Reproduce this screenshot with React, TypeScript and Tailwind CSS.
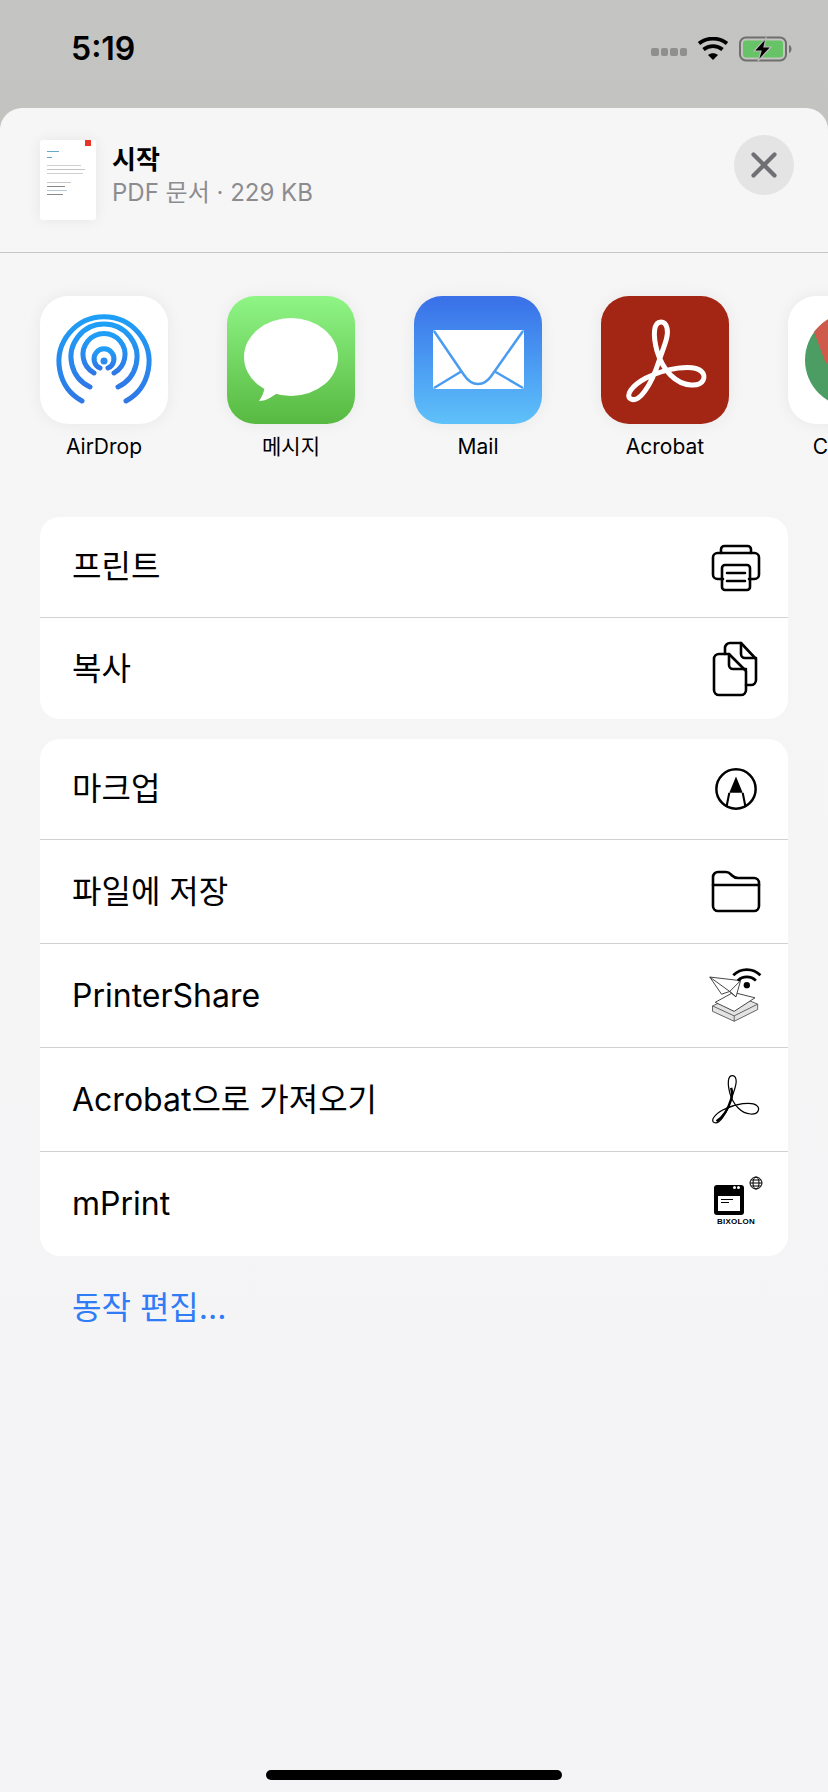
import React from "react";

const ff = { fontFamily: '"Inter","Noto Sans CJK KR",sans-serif' };
const acro = "M60 26C52 26 52 40 56 55C62 75 75 88 90 89C103 90 106 80 100 75C92 68 65 72 45 82C30 90 24 100 30 103C38 107 50 90 58 65C63 50 68 40 66 32C65 28 63 26 60 26Z";

function AirDropIcon() {
  return (
    <svg viewBox="0 0 128 128" className="w-full h-full">
      <defs>
        <linearGradient id="ad" x1="0" y1="0" x2="0" y2="1">
          <stop offset="0" stopColor="#1f9ff6" />
          <stop offset="1" stopColor="#2f78e6" />
        </linearGradient>
      </defs>
      <g fill="none" stroke="url(#ad)" strokeWidth="5" strokeLinecap="round" gradientUnits="userSpaceOnUse">
        <path d="M42 105A45 45 0 1 1 86 105" />
        <path d="M50 91A33 33 0 1 1 78 91" />
        <path d="M54 77A21 21 0 1 1 74 77" />
        <path d="M60 72A10 10 0 1 1 68 72" />
      </g>
      <circle cx="64" cy="65" r="3.5" fill="#2b8cf0" />
    </svg>
  );
}
function MessageIcon() {
  return (
    <svg viewBox="0 0 128 128" className="w-full h-full">
      <ellipse cx="64" cy="61" rx="47" ry="39" fill="#fff" />
      <path d="M38 90C37 96 35 101 32 105C40 105 46 100 52 96Z" fill="#fff" />
    </svg>
  );
}
function MailIcon() {
  return (
    <svg viewBox="0 0 128 128" className="w-full h-full">
      <rect x="19" y="34" width="91" height="59" rx="2" fill="#fff" />
      <path d="M20 35L50 79C58 91 70 91 78 79L109 35M20 92L48 75M109 92L80 75" fill="none" stroke="#4a9cf0" strokeWidth="2.5" />
    </svg>
  );
}
function ChromeIcon() {
  return (
    <svg viewBox="0 0 128 128" className="w-full h-full">
      <circle cx="64" cy="64" r="47" fill="#4b9d64" />
      <path d="M26 36A47 47 0 0 1 102 36L64 40L38 68Z" fill="#cf5b4d" />
      <path d="M111 64A47 47 0 0 1 64 111L84 64Z" fill="#f3c64b" />
      <circle cx="64" cy="64" r="22" fill="#fff" />
      <circle cx="64" cy="64" r="17" fill="#4f8fe0" />
    </svg>
  );
}
function AcroTile() {
  return (
    <svg viewBox="0 0 128 128" className="w-full h-full">
      <path d={acro} fill="none" stroke="#fff" strokeWidth="5" />
    </svg>
  );
}
const black = { fill: "none", stroke: "#000", strokeWidth: 2.6, strokeLinejoin: "round" as const, strokeLinecap: "round" as const };

function PrintIcon() {
  return (
    <svg viewBox="0 0 52 52" className="w-[52px] h-[52px]">
      <g {...black}>
        <path d="M11 12V8.5A3.5 3.5 0 0 1 14.5 5H37.500A3.500 3.500 0 0 1 41 8.500V12" />
        <path d="M13 38H7.500A4.500 4.500 0 0 1 3 33.500V16.500A4.500 4.500 0 0 1 7.500 12H44.500A4.500 4.500 0 0 1 49 16.500V33.500A4.500 4.500 0 0 1 44.500 38H39" />
        <rect x="12" y="24" width="28" height="25" rx="3" />
        <path d="M17 32H35M17 40H35" />
      </g>
    </svg>
  );
}
function CopyIcon() {
  return (
    <svg viewBox="0 0 52 56" className="w-[52px] h-[56px]">
      <g {...black}>
        <path d="M15 13V7A5 5 0 0 1 20 2H31L46 18V39A5 5 0 0 1 41 44H36" />
        <path d="M31 2V13A4 4 0 0 0 35 17H46" />
        <path d="M9 13H19L36 30V49A5 5 0 0 1 31 54H9A5 5 0 0 1 4 49V18A5 5 0 0 1 9 13Z" />
        <path d="M19 13V24A4 4 0 0 0 23 28H36" />
      </g>
    </svg>
  );
}
function MarkupIcon() {
  return (
    <svg viewBox="0 0 48 48" className="w-[46px] h-[46px]">
      <circle cx="24" cy="24" r="20.500" fill="none" stroke="#000" strokeWidth="2.600" />
      <path d="M24 11L31 28H17Z" fill="#000" />
      <path d="M17 28L14 43M31 28L34 43" fill="none" stroke="#000" strokeWidth="2.200" />
    </svg>
  );
}
function FolderIcon() {
  return (
    <svg viewBox="0 0 52 44" className="w-[52px] h-[44px]">
      <g {...black}>
        <path d="M3 14V7A5 5 0 0 1 8 2H16C19 2 20 3.500 22 5.500C24 7.500 25 8 28 8H44A5 5 0 0 1 49 13V36A5 5 0 0 1 44 41H8A5 5 0 0 1 3 36Z" />
        <path d="M3 15H49" />
      </g>
    </svg>
  );
}
function PrinterShareIcon() {
  return (
    <svg viewBox="0 0 62 60" className="w-[60px] h-[58px]">
      <path d="M5 41L31 29L55 39V45L29 58L5 47Z" fill="#e3e3e3" stroke="#555" strokeWidth="1" />
      <path d="M5 41L29 52L55 39M29 52V58" fill="none" stroke="#555" strokeWidth="1" />
      <path d="M8 37L28 26L52 32L29 47Z" fill="#fff" stroke="#333" strokeWidth="1" />
      <path d="M2 9L36 13L31 31L24 25L15 28Z" fill="#fff" stroke="#333" strokeWidth="1" />
      <path d="M2 9L24 25L36 13M24 25L31 31" fill="none" stroke="#333" strokeWidth="1" />
      <circle cx="43" cy="18" r="3.500" fill="#000" />
      <path d="M33 13A14 14 0 0 1 53 13M28 7A21 21 0 0 1 58 7" fill="none" stroke="#000" strokeWidth="3" />
    </svg>
  );
}
function AcroBlack() {
  return (
    <svg viewBox="20 20 92 92" className="w-[58px] h-[58px]">
      <path d={acro} fill="none" stroke="#000" strokeWidth="2" />
      <path d="M58 65C52 85 42 96 34 101M58 65C60 58 60 52 58 46" fill="none" stroke="#000" strokeWidth="4" />
    </svg>
  );
}
function BixolonIcon() {
  return (
    <div className="relative w-[56px] h-[56px] flex flex-col items-center">
      <div className="w-[30px] h-[30px] mt-[9px] bg-black rounded-[3px] flex items-end justify-center pb-[4px] self-start ml-[6px]">
        <div className="w-[22px] h-[15px] bg-white flex flex-col gap-[2px] p-[3px]">
          <div className="h-px w-[12px] bg-black" />
          <div className="h-px w-[8px] bg-black" />
        </div>
      </div>
      <div className="absolute left-[25px] top-[10px] w-[7px] h-[3px] flex gap-[1px] justify-end">
        <div className="w-[3px] h-[3px] bg-white rounded-full" />
        <div className="w-[3px] h-[3px] bg-white rounded-full" />
      </div>
      <span className="text-[8px] leading-[10px] font-black tracking-[0.2px] mt-[2px]" style={{ fontFamily: '"Liberation Sans",sans-serif' }}>BIXOLON</span>
      <svg viewBox="0 0 14 14" className="absolute right-[1px] top-0 w-[14px] h-[14px]">
        <g fill="none" stroke="#000" strokeWidth="1">
          <circle cx="7" cy="7" r="6" />
          <ellipse cx="7" cy="7" rx="3" ry="6" />
          <path d="M1 7H13M2 4H12M2 10H12" />
        </g>
      </svg>
    </div>
  );
}

const apps = [
  { label: "AirDrop", cls: "bg-white", icon: <AirDropIcon /> },
  { label: "메시지", cls: "bg-gradient-to-b from-[#8ff585] to-[#57b940]", icon: <MessageIcon /> },
  { label: "Mail", cls: "bg-gradient-to-b from-[#3a6fe8] to-[#5fc1f9]", icon: <MailIcon /> },
  { label: "Acrobat", cls: "bg-[#a32514]", icon: <AcroTile /> },
  { label: "Chrome", cls: "bg-white", icon: <ChromeIcon /> },
];

function Row({ label, icon, h, last }: { label: string; icon: React.ReactNode; h: string; last?: boolean }) {
  return (
    <div className={`flex items-center justify-between pl-[32px] pr-[24px] ${h} ${last ? "" : "border-b border-[#d2d2d2]"}`}>
      <span className="text-[32px] leading-[40px] text-black">{label}</span>
      <div className="w-[56px] flex justify-center">{icon}</div>
    </div>
  );
}

export default function App() {
  return (
    <div className="w-[828px] h-[1792px] flex flex-col overflow-hidden bg-gradient-to-b from-[#c4c4c2] to-[#b2b3b0]" style={ff}>
      <div className="h-[108px] shrink-0 flex justify-between items-start pl-[71px] pr-[33px] pt-[29px]">
        <span className="text-[32px] leading-[40px] font-semibold text-black">5:19</span>
        <div className="flex items-center gap-[10px] pt-[7px]">
          <div className="flex gap-[2px] mt-[6px]">
            {[0, 1, 2, 3].map((i) => (
              <div key={i} className="w-[7.500px] h-[7.500px] rounded-[2px] bg-[#8f908e]" />
            ))}
          </div>
          <svg viewBox="0 0 32 24" className="w-[32px] h-[24px]">
            <path d="M16 23L11 18C14 15.500 18 15.500 21 18Z" fill="#000" />
            <path d="M6.500 12.500C12 8 20 8 25.500 12.500M2 6.500C10 0 22 0 30 6.500" fill="none" stroke="#000" strokeWidth="3.800" />
          </svg>
          <svg viewBox="0 0 56 26" className="w-[56px] h-[26px]">
            <rect x="1" y="1.500" width="46" height="23" rx="6" fill="none" stroke="#6f706e" strokeWidth="2" />
            <rect x="4" y="4.500" width="40" height="17" rx="3" fill="#66c466" />
            <path d="M50 9C52 10 52.500 11.500 52.500 13C52.500 14.500 52 16 50 17Z" fill="#6f706e" />
            <path d="M27 2L15 15H22L19 25L32 11H25Z" fill="#000" stroke="#b9bab8" strokeWidth="1.200" />
          </svg>
        </div>
      </div>

      <div className="flex-1 flex flex-col rounded-t-[22px] bg-gradient-to-b from-[#f6f6f6] to-[#f4f4f6] overflow-hidden">
        <div className="h-[145px] shrink-0 flex items-start border-b border-[#c6c6c6] pl-[40px] pr-[34px]">
          <div className="relative w-[56px] h-[80px] mt-[32px] bg-white rounded-[3px] shadow-[0_0_14px_rgba(0,0,0,0.07)] overflow-hidden">
            <div className="absolute right-[5px] top-0 w-[6px] h-[6px] bg-[#e8352a]" />
            <div className="absolute left-[7px] top-[11px] w-[12px] h-[1px] bg-[#6aa6c8]" />
            <div className="absolute left-[7px] top-[17px] w-[5px] h-[1px] bg-[#6aa6c8]" />
            <div className="absolute left-[7px] top-[25px] w-[34px] h-[1px] bg-[#d0d0d0]" />
            <div className="absolute left-[7px] top-[29px] w-[38px] h-[1px] bg-[#c4c4c4]" />
            <div className="absolute left-[7px] top-[33px] w-[36px] h-[1px] bg-[#d0d0d0]" />
            <div className="absolute left-[7px] top-[42px] w-[24px] h-[1px] bg-[#c8c8c8]" />
            <div className="absolute left-[7px] top-[46px] w-[18px] h-[1px] bg-[#888]" />
            <div className="absolute left-[7px] top-[50px] w-[20px] h-[1px] bg-[#b5c9d6]" />
            <div className="absolute left-[7px] top-[54px] w-[16px] h-[1px] bg-[#888]" />
          </div>
          <div className="ml-[16px] mt-[36px] flex flex-col">
            <span className="text-[26px] leading-[32px] font-semibold text-black">시작</span>
            <span className="text-[24px] leading-[32px] mt-[1px] text-[#8c8c90]">PDF 문서 · 229 KB</span>
          </div>
          <div className="ml-auto mt-[27px] w-[60px] h-[60px] rounded-full bg-[#e4e4e4] flex items-center justify-center">
            <svg viewBox="0 0 26 26" className="w-[26px] h-[26px]">
              <path d="M2.500 2.500L23.500 23.500M23.500 2.500L2.500 23.500" stroke="#707074" strokeWidth="4.200" strokeLinecap="round" />
            </svg>
          </div>
        </div>

        <div className="flex gap-[59px] pl-[40px] pt-[43px] shrink-0">
          {apps.map((a) => (
            <div key={a.label} className="w-[128px] shrink-0 flex flex-col items-center">
              <div className={`w-[128px] h-[128px] rounded-[28px] overflow-hidden shadow-[0_0_16px_rgba(0,0,0,0.06)] ${a.cls}`}>{a.icon}</div>
              <span className="text-[21px] leading-[28px] mt-[9px] text-black whitespace-nowrap">{a.label}</span>
            </div>
          ))}
        </div>

        <div className="mx-[40px] mt-[56px] bg-white rounded-[20px] flex flex-col shrink-0">
          <Row label="프린트" icon={<PrintIcon />} h="h-[101px]" />
          <Row label="복사" icon={<CopyIcon />} h="h-[101px]" last />
        </div>

        <div className="mx-[40px] mt-[20px] bg-white rounded-[20px] flex flex-col shrink-0">
          <Row label="마크업" icon={<MarkupIcon />} h="h-[101px]" />
          <Row label="파일에 저장" icon={<FolderIcon />} h="h-[104px]" />
          <Row label="PrinterShare" icon={<PrinterShareIcon />} h="h-[104px]" />
          <Row label="Acrobat으로 가져오기" icon={<AcroBlack />} h="h-[104px]" />
          <Row label="mPrint" icon={<BixolonIcon />} h="h-[104px]" last />
        </div>

        <div className="pl-[72px] mt-[32px] text-[32px] leading-[40px] text-[#2f7cf6]">동작 편집...</div>

        <div className="mt-auto mb-[12px] self-center w-[296px] h-[10px] rounded-full bg-black" />
      </div>
    </div>
  );
}
